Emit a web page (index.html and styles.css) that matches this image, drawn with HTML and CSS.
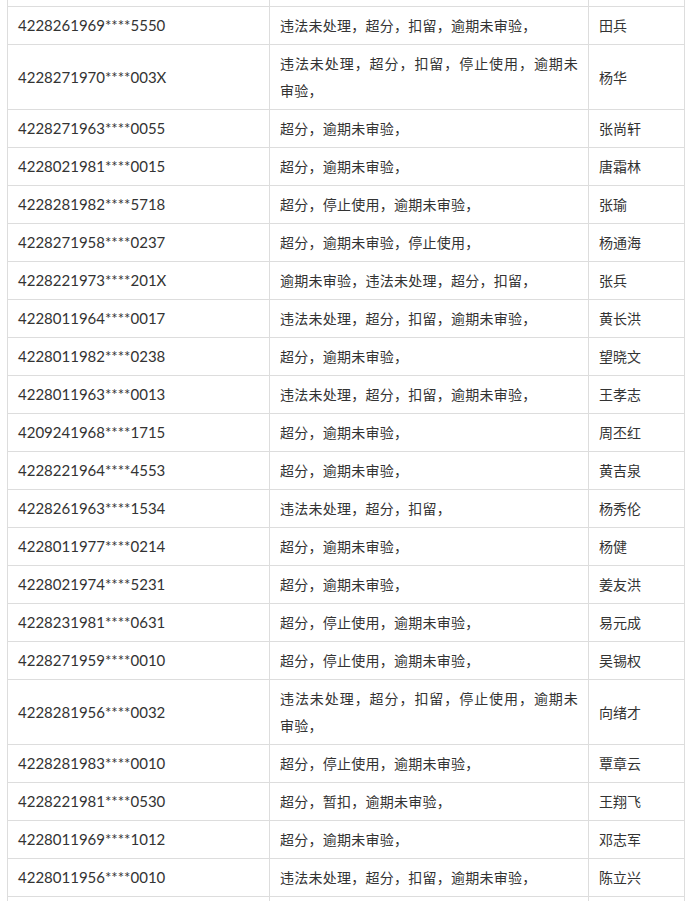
FILE: index.html
```html
<!DOCTYPE html>
<html lang="zh-CN">
<head>
<meta charset="utf-8">
<title>名单</title>
<link rel="stylesheet" href="styles.css">
</head>
<body>
<div class="wrap">
<table class="list">
<colgroup><col class="c-id"><col class="c-st"><col class="c-nm"></colgroup>
<tbody>
<tr class="filler"><td class="id">&nbsp;</td><td class="st">&nbsp;</td><td class="nm">&nbsp;</td></tr>
<tr><td class="id">4228261969****5550</td><td class="st">违法未处理，超分，扣留，逾期未审验，</td><td class="nm">田兵</td></tr>
<tr><td class="id">4228271970****003X</td><td class="st">违法未处理，超分，扣留，停止使用，逾期未审验，</td><td class="nm">杨华</td></tr>
<tr><td class="id">4228271963****0055</td><td class="st">超分，逾期未审验，</td><td class="nm">张尚轩</td></tr>
<tr><td class="id">4228021981****0015</td><td class="st">超分，逾期未审验，</td><td class="nm">唐霜林</td></tr>
<tr><td class="id">4228281982****5718</td><td class="st">超分，停止使用，逾期未审验，</td><td class="nm">张瑜</td></tr>
<tr><td class="id">4228271958****0237</td><td class="st">超分，逾期未审验，停止使用，</td><td class="nm">杨通海</td></tr>
<tr><td class="id">4228221973****201X</td><td class="st">逾期未审验，违法未处理，超分，扣留，</td><td class="nm">张兵</td></tr>
<tr><td class="id">4228011964****0017</td><td class="st">违法未处理，超分，扣留，逾期未审验，</td><td class="nm">黄长洪</td></tr>
<tr><td class="id">4228011982****0238</td><td class="st">超分，逾期未审验，</td><td class="nm">望晓文</td></tr>
<tr><td class="id">4228011963****0013</td><td class="st">违法未处理，超分，扣留，逾期未审验，</td><td class="nm">王孝志</td></tr>
<tr><td class="id">4209241968****1715</td><td class="st">超分，逾期未审验，</td><td class="nm">周丕红</td></tr>
<tr><td class="id">4228221964****4553</td><td class="st">超分，逾期未审验，</td><td class="nm">黄吉泉</td></tr>
<tr><td class="id">4228261963****1534</td><td class="st">违法未处理，超分，扣留，</td><td class="nm">杨秀伦</td></tr>
<tr><td class="id">4228011977****0214</td><td class="st">超分，逾期未审验，</td><td class="nm">杨健</td></tr>
<tr><td class="id">4228021974****5231</td><td class="st">超分，逾期未审验，</td><td class="nm">姜友洪</td></tr>
<tr><td class="id">4228231981****0631</td><td class="st">超分，停止使用，逾期未审验，</td><td class="nm">易元成</td></tr>
<tr><td class="id">4228271959****0010</td><td class="st">超分，停止使用，逾期未审验，</td><td class="nm">吴锡权</td></tr>
<tr><td class="id">4228281956****0032</td><td class="st">违法未处理，超分，扣留，停止使用，逾期未审验，</td><td class="nm">向绪才</td></tr>
<tr><td class="id">4228281983****0010</td><td class="st">超分，停止使用，逾期未审验，</td><td class="nm">覃章云</td></tr>
<tr><td class="id">4228221981****0530</td><td class="st">超分，暂扣，逾期未审验，</td><td class="nm">王翔飞</td></tr>
<tr><td class="id">4228011969****1012</td><td class="st">超分，逾期未审验，</td><td class="nm">邓志军</td></tr>
<tr><td class="id">4228011956****0010</td><td class="st">违法未处理，超分，扣留，逾期未审验，</td><td class="nm">陈立兴</td></tr>
<tr class="filler"><td class="id">&nbsp;</td><td class="st">&nbsp;</td><td class="nm">&nbsp;</td></tr>
</tbody>
</table>
</div>
</body>
</html>
```

FILE: styles.css
```css
html, body {
  margin: 0;
  padding: 0;
  background: #ffffff;
}
.wrap {
  height: 901px;
  overflow: hidden;
  padding-left: 7px;
}
.list {
  margin-top: -32px;
  border-collapse: collapse;
  table-layout: fixed;
  width: 677px;
  font-family: "Noto Sans CJK SC", sans-serif;
  font-size: 14px;
  line-height: 27px;
  color: #333333;
}
.c-id { width: 262px; }
.c-st { width: 319px; }
.c-nm { width: 96px; }
.list td {
  border: 1px solid #dddddd;
  padding: 5px 10px;
  vertical-align: middle;
  text-align: left;
}
.list td.id {
  font-family: "Lato", "Noto Sans CJK SC", sans-serif;
  font-size: 15px;
}
.list td.st {
  text-align: justify;
  letter-spacing: 0.25px;
}
```
